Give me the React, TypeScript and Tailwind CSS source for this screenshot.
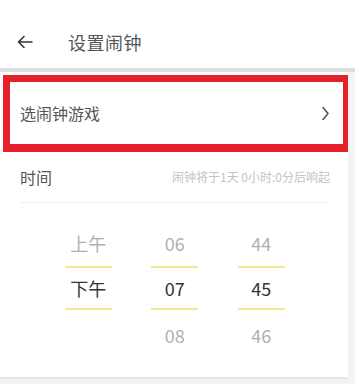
import React from 'react';

const font = { fontFamily: '"Noto Sans CJK SC", "Noto Sans", sans-serif' };

const columns = [
  { items: ['上午', '下午', ''], },
  { items: ['06', '07', '08'], },
  { items: ['44', '45', '46'], },
];

const App: React.FC = () => {
  return (
    <div className="w-[355px] h-[384px] bg-[#f3f3f3] flex flex-col overflow-hidden" style={font}>
      {/* header */}
      <div className="h-[68px] bg-white flex items-center pt-[16px] shrink-0">
        <svg width="16" height="14" viewBox="0 0 16 14" className="ml-[17px]" fill="none" stroke="#333" strokeWidth="1.6" strokeLinecap="round" strokeLinejoin="round">
          <path d="M15 7H1.5M7 1.5L1.5 7L7 12.5" />
        </svg>
        <span className="ml-[35px] text-[18px] tracking-[0.5px] text-[#555] leading-none">设置闹钟</span>
      </div>
      <div className="h-[4px] bg-[#dddddd] shrink-0" />

      {/* card */}
      <div className="w-[348px] bg-white pl-[3px] pt-[3px] pb-[2px] shrink-0">
        <div className="h-[77px] border-[#e5202b] border-t-[7px] border-l-[7px] border-r-[5px] border-b-[8px] flex items-center justify-between pl-[10px] pr-[13px]">
          <span className="text-[16px] text-[#555]">选闹钟游戏</span>
          <svg width="9" height="15" viewBox="0 0 9 15" fill="none" stroke="#555" strokeWidth="1.6" strokeLinecap="round" strokeLinejoin="round">
            <path d="M2 1.5L7 7.5L2 13.5" />
          </svg>
        </div>

        <div className="ml-[17px] mr-[18px] h-[51px] flex items-center justify-between border-b border-[#f0f0f0]">
          <span className="text-[16px] text-[#555]">时间</span>
          <span className="text-[12px] text-[#c4c4c4]">闹钟将于1天 0小时:0分后响起</span>
        </div>

        <div className="flex pl-[42px] pt-[18px] h-[172px]">
          {columns.map((col, ci) => (
            <div key={ci} className="w-[86.5px] flex flex-col items-center">
              <div className="h-[45px] flex items-center text-[18px] text-[#b0b0b0]">{col.items[0]}</div>
              <div className="w-[47px] h-[2px] bg-[#f5e690]" />
              <div className="h-[40px] flex items-center text-[18px] text-[#333]">{col.items[1]}</div>
              <div className="w-[47px] h-[2px] bg-[#f5e690]" />
              <div className="h-[50px] flex items-center text-[18px] text-[#b0b0b0]">{col.items[2]}</div>
            </div>
          ))}
        </div>
      </div>
      <div className="h-[2px] w-[348px] bg-[#e6e6e6]" />
    </div>
  );
};

export default App;
